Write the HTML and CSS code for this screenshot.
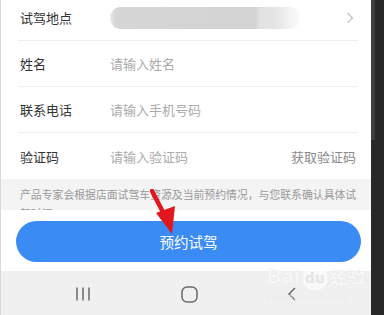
FILE: index.html
```html
<!DOCTYPE html>
<html lang="zh">
<head>
<meta charset="utf-8">
<link rel="stylesheet" href="styles.css">
</head>
<body>
<div class="screen">
  <div class="app">
    <div class="content">
      <div class="form">
        <div class="row">
          <span class="label">试驾地点</span>
          <span class="blur"></span>
          <svg class="chev" width="8" height="12" viewBox="0 0 8 12"><path d="M1.5 1 L6.5 6 L1.5 11" fill="none" stroke="#c4c4c4" stroke-width="1.3"/></svg>
        </div>
        <div class="row">
          <span class="label">姓名</span>
          <span class="ph">请输入姓名</span>
        </div>
        <div class="row">
          <span class="label">联系电话</span>
          <span class="ph">请输入手机号码</span>
        </div>
        <div class="row last">
          <span class="label">验证码</span>
          <span class="ph">请输入验证码</span>
          <span class="code">获取验证码</span>
        </div>
      </div>
      <div class="note">
        <p>产品专家会根据店面试驾车资源及当前预约情况，与您联系确认具体试驾时间。</p>
      </div>
    </div>
    <div class="footer">
      <button class="btn">预约试驾</button>
    </div>
    <div class="nav">
      <svg width="16" height="16" viewBox="0 0 16 16"><path d="M2 1.5 V14.5 M8 1.5 V14.5 M14 1.5 V14.5" stroke="#6a6a6a" stroke-width="1.5"/></svg>
      <svg width="17" height="17" viewBox="0 0 17 17"><rect x="1" y="1" width="15" height="15" rx="5" fill="none" stroke="#6a6a6a" stroke-width="1.5"/></svg>
      <svg width="10" height="14" viewBox="0 0 10 14"><path d="M8 1 L2 7 L8 13" fill="none" stroke="#6a6a6a" stroke-width="1.5"/></svg>
    </div>
    <svg class="arrow" width="40" height="50" viewBox="0 0 40 50"><path d="M2 2 L15 27" stroke="#e3161d" stroke-width="4.5" stroke-linecap="round"/><path d="M6 24 L25 17 L22 45 Z" fill="#e3161d"/></svg>
    <div class="mark">
      <div class="mk-top">Bai<span class="du">du</span><span class="jy">经验</span></div>
      <div class="mk-url">jingyan.baidu.com</div>
    </div>
  </div>
  <div class="side"><div class="thumb"></div></div>
</div>
</body>
</html>
```
FILE: styles.css
```css
html, body {
  margin: 0;
  padding: 0;
}
body {
  width: 384px;
  height: 315px;
  overflow: hidden;
  font-family: "Noto Sans CJK SC", "Noto Sans", sans-serif;
}
.screen {
  display: flex;
  width: 384px;
  height: 315px;
}
.app {
  position: relative;
  width: 371px;
  height: 315px;
  background: #fff;
  display: flex;
  flex-direction: column;
  overflow: hidden;
  border-left: 1px solid #d8d8d8;
  box-sizing: border-box;
}
.side {
  width: 13px;
  background: #282828;
}
.thumb {
  width: 4px;
  height: 140px;
  background: #3e3e3e;
}
.content {
  height: 211px;
  overflow: hidden;
}
.form {
  margin-top: -5px;
  padding: 0 13px 0 17px;
}
.row {
  height: 45px;
  border-bottom: 1px solid #efefef;
  display: flex;
  align-items: center;
  font-size: 13px;
  line-height: 1;
  padding-left: 2px;
}
.row.last {
  border-bottom: none;
  height: 46px;
}
.label {
  width: 90px;
  color: #333;
}
.ph {
  color: #ababab;
  flex: 1;
}
.code {
  color: #8a8a8a;
  margin-right: 2px;
}
.blur {
  width: 190px;
  height: 22px;
  border-radius: 11px;
  background: linear-gradient(90deg, #ececec 0px, #d6d6d6 5px, #d4d4d4 145px, #e2e2e2 150px, #e4e4e4 165px, #f3f3f3 180px, #fafafa 190px);
  flex: none;
}
.chev {
  margin-left: auto;
  margin-right: 4px;
}
.note {
  background: #f4f4f4;
  height: 31px;
  overflow: hidden;
  padding: 6px 0 0 19px;
  box-sizing: border-box;
}
.note p {
  margin: 0;
  width: 345px;
  font-size: 10.85px;
  line-height: 19px;
  color: #9a9a9a;
}
.footer {
  height: 60px;
  padding: 10px 10px 0 15px;
  box-sizing: border-box;
}
.btn {
  display: block;
  width: 345px;
  height: 41px;
  border: none;
  border-radius: 21px;
  background: #3a8cf4;
  color: #fff;
  font-family: "Noto Sans CJK SC", sans-serif;
  font-size: 14.5px;
  padding: 0;
}
.nav {
  flex: 1;
  background: #f0f0f0;
  display: flex;
  align-items: center;
  justify-content: space-between;
  padding: 2px 74px 0 74px;
}
.arrow {
  position: absolute;
  left: 149px;
  top: 189px;
}
.mark {
  position: absolute;
  left: 266px;
  top: 264px;
  color: rgba(255,255,255,0.8);
  text-shadow: 0 0 1px rgba(0,0,0,0.1);
  font-family: "Liberation Sans", sans-serif;
}
.mk-top {
  font-size: 20px;
  font-weight: bold;
  line-height: 24px;
  letter-spacing: 1px;
}
.du {
  display: inline-block;
  background: rgba(255,255,255,0.6);
  color: #e6e6e6;
  border-radius: 10px;
  font-size: 15px;
  padding: 0 2px;
  margin: 0 2px;
}
.jy {
  font-family: "Noto Sans CJK SC", sans-serif;
  font-size: 17px;
}
.mk-url {
  font-size: 9px;
  line-height: 14px;
  color: rgba(255,255,255,0.7);
  letter-spacing: 0.5px;
}
```
